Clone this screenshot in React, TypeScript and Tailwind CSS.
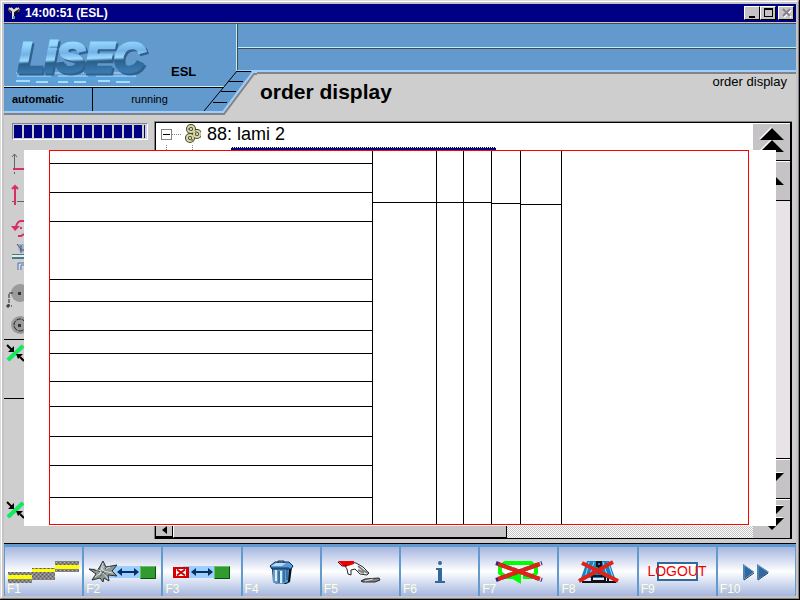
import React from "react";

const segments = Array.from({ length: 13 }, (_, i) => i);

function TitleBar() {
  const button =
    "flex h-[14px] w-4 items-center justify-center border border-t-white border-l-white border-r-black border-b-black bg-[#c6c3c6]";
  return (
    <header className="flex h-[18px] shrink-0 items-center bg-[#000084] pr-[2px] pl-[2px]">
      <svg width="16" height="16" viewBox="0 0 16 16" aria-hidden="true">
        <path d="M1 3l4-1 3 2 3-2 4 1-3 5-3 1v5H7V9L4 8z" fill="#111" />
        <path d="M3 3l4 3v8M13 3L8 6M5 3l3 3 3-3" stroke="#ddd" strokeWidth="2" fill="none" />
        <path d="M2 4l3 4M12 7l2-3" stroke="#a5559c" />
        <path d="M8 11v3" stroke="#4a9c9c" strokeWidth="2" />
      </svg>
      <h1 className="ml-[3px] flex-1 text-[12px] leading-4 font-bold text-white">14:00:51 (ESL)</h1>
      <button type="button" aria-label="Minimize" className={button}>
        <svg width="12" height="12" shapeRendering="crispEdges"><path d="M3 9h6v2H3z" /></svg>
      </button>
      <button type="button" aria-label="Maximize" className={button}>
        <svg width="12" height="12" shapeRendering="crispEdges">
          <path d="M2 1h9v9H2z M3 3v6h7V3z" fillRule="evenodd" />
        </svg>
      </button>
      <button type="button" aria-label="Close" className={`${button} ml-[2px]`}>
        <svg width="12" height="12" fill="none" strokeWidth="2">
          <path d="M4 3l7 7M11 3l-7 7" stroke="#fff" />
          <path d="M3 2l7 7M10 2l-7 7" stroke="#848284" />
        </svg>
      </button>
    </header>
  );
}

function Logo() {
  return (
    <svg width="144" height="60" viewBox="0 0 144 60" role="img" aria-label="LiSEC">
      <defs>
        <linearGradient id="chrome" x1="0" y1="0" x2="0.1" y2="1">
          <stop offset="0.25" stopColor="#94d7ff" />
          <stop offset="0.45" stopColor="#73b2e7" />
          <stop offset="0.58" stopColor="#9cdbff" />
          <stop offset="0.64" stopColor="#29618c" />
          <stop offset="0.85" stopColor="#3979b0" />
        </linearGradient>
      </defs>
      <path d="M4 49h35l3 3 4-3h30l4 3 4-3h42l-4 7H86l-6-2-5 3H45l-5-2-4 2H4z" fill="#5aa2de" />
      <path d="M4 47h118M5 50h34M46 50h30M84 50h40" stroke="#b5e3ff" />
      <path
        d="M4 55h14M24 56h12M46 56h10M62 56h12M86 55h12M104 56h14"
        stroke="#a5dbff"
        strokeWidth="2"
        fill="none"
      />
      <text
        x="6"
        y="46"
        className="drop-shadow-[2px_2px_0_#31618c]"
        fontFamily="Liberation Sans, Arial, sans-serif"
        fontWeight="bold"
        fontStyle="italic"
        fontSize="43"
        fill="url(#chrome)"
        stroke="url(#chrome)"
        strokeWidth="3"
      >
        LiSEC
      </text>
    </svg>
  );
}

function HeaderPanel() {
  return (
    <section className="relative mt-px flex h-[92px] shrink-0 border-t border-[#4a4a4a] bg-[#cecece]">
      <div className="flex w-[232px] shrink-0 flex-col">
        <div className="flex h-[62px] items-end bg-[#639ace] pl-[8px]">
          <Logo />
          <span className="ml-[15px] pb-[6px] text-[13px] leading-4 font-bold">ESL</span>
        </div>
        <div className="h-px bg-[#bdf3ff]" />
        <div className="h-px bg-black" />
        <div className="flex h-[23px] items-center bg-[#639ace] text-[11px]">
          <span className="flex h-full w-[89px] items-center border-r border-black pl-2 font-bold">automatic</span>
          <span className="w-[113px] text-center">running</span>
        </div>
        <div className="h-[2px] bg-[#9ccfff]" />
        <div className="h-[2px] bg-[#848284]" />
      </div>
      <div className="flex flex-1 flex-col">
        <div className="border-l border-[#bdf3ff]">
          <div className="border-l border-[#4a4a4a] bg-[#639ace]">
            <div className="h-[23px]" />
            <div className="h-px bg-[#bdf3ff]" />
            <div className="h-px bg-[#4a4a4a]" />
            <div className="h-[21px]" />
          </div>
        </div>
        <div className="h-[2px] bg-[#9ccfff]" />
        <div className="h-[2px] bg-[#848284]" />
        <div className="flex justify-between pr-[9px] pl-[24px]">
          <h2 className="pt-[6px] text-[21px] leading-6 font-bold">order display</h2>
          <span className="text-[13px] leading-4">order display</span>
        </div>
      </div>
      <svg className="absolute top-[47px] left-[199px]" width="54" height="44" viewBox="0 0 54 44" aria-hidden="true">
        <path d="M34 0H54V44H1V42L34 0Z" fill="#cecece" />
        <path d="M1 40L34 0H50L20 40Z" fill="#639ace" />
        <path d="M0 41H20L50 1H54" stroke="#9ccfff" strokeWidth="2" fill="none" />
        <path d="M0 43H21L51 3H54" stroke="#848284" strokeWidth="2" fill="none" />
        <path d="M1 40L34 0M33 .5H48M25 10.5H40M18 20.5H33M10 31.5H24" stroke="#000" fill="none" />
      </svg>
    </section>
  );
}

function SideTools() {
  return (
    <div className="w-[20px] shrink-0 overflow-hidden">
      <svg className="block" width="20" height="30" aria-hidden="true">
        <path d="M10.5 4v15M8 7l2.500-3L13 7M10.500 22v2" stroke="#636563" fill="none" />
        <path d="M9 19h11" stroke="#d63063" strokeWidth="2" />
      </svg>
      <svg className="block" width="20" height="33" aria-hidden="true">
        <path d="M8 21.500h3M13 21.500h7" stroke="#636563" />
        <path d="M11 25V7M8 9l3-3 3 3" stroke="#d63063" strokeWidth="2" fill="none" />
      </svg>
      <svg className="block" width="20" height="29" aria-hidden="true">
        <path d="M20 8h-3q-3 0-5 5M14 23h3l3-2" stroke="#d63063" strokeWidth="2" fill="none" />
        <path d="M7 13h9l-5 5zM16 14h2v2h-2z" fill="#d63063" />
      </svg>
      <svg className="block" width="20" height="38" aria-hidden="true">
        <path d="M13 2h7v9l-5-2z" fill="#a5b2c6" />
        <path d="M13 2l4 5v4M17 3v5h3" stroke="#42597b" fill="none" />
        <path d="M8 12h12v5H8z" fill="#4a7984" />
        <path d="M8 14h12" stroke="#dee" strokeWidth="2" />
        <path d="M14 28v-7h6M17 28v-5h3" stroke="#526da5" fill="#dde" />
      </svg>
      <svg className="block" width="20" height="32" aria-hidden="true">
        <circle cx="16" cy="13" r="9" fill="#9c9a9c" />
        <path d="M14 12h3v3h-3z" fill="#333" />
        <path d="M9 13H5v13M2 26h6M4 24v5" stroke="#222" strokeDasharray="4 1" fill="none" />
      </svg>
      <svg className="block" width="20" height="27" aria-hidden="true">
        <circle cx="16" cy="13" r="9" fill="#9c9a9c" />
        <circle cx="16" cy="13" r="6" stroke="#222" strokeDasharray="5 1" fill="none" />
        <path d="M14 12h3v3h-3z" fill="#333" />
      </svg>
      <div className="h-px bg-black" />
      <div className="h-[58px]"><CompressIcon /></div>
      <div className="h-px bg-black" />
      <div className="h-[98px]" />
      <CompressIcon />
    </div>
  );
}

function CompressIcon() {
  return (
    <svg className="block" width="20" height="26" aria-hidden="true">
      <path d="M4 20L19 6" stroke="#00df9c" strokeWidth="4" />
      <path d="M4 20L19 6" stroke="#18f329" strokeWidth="2" />
      <path d="M3 5l5 5M20 21l-4-4" stroke="#000" strokeWidth="2" />
      <path d="M10 6v6H4zM12 14h7l-5 5z" />
    </svg>
  );
}

function ScrollButton({ label, d, size }: { label: string; d: string; size: string }) {
  return (
    <button
      type="button"
      aria-label={label}
      className={`flex w-full shrink-0 items-start border-t border-t-white border-b-black bg-[#c6c3c6] ${size}`}
    >
      <svg width="37" height="36" viewBox="0 0 37 36">
        <path d={d} fill="#fff" transform="translate(-1 -1)" />
        <path d={d} />
      </svg>
    </button>
  );
}

function OrderTree() {
  return (
    <div className="mt-[6px] mr-[4px] mb-[4px] flex flex-1 border-t border-l border-[#848284]">
      <div className="flex flex-1 border border-r-2 border-black">
        <div className="flex min-w-0 flex-1 flex-col bg-white">
          <div className="flex-1">
            <div className="flex h-[22px] items-center pl-[5px]">
              <button type="button" aria-label="Collapse" className="flex size-[11px] items-center justify-center border border-[#848284]">
                <span className="h-px w-[7px] bg-black" />
              </button>
              <span className="w-[9px] border-t border-dotted border-[#848284]" />
              <svg className="ml-1" width="16" height="20" viewBox="0 0 16 20" fill="none" aria-hidden="true">
                <g stroke="#424129" strokeWidth="4">
                  <circle cx="6" cy="5" r="3" /><circle cx="12" cy="10" r="3" /><circle cx="5" cy="14" r="3" />
                </g>
                <g stroke="#d6d7a5" strokeWidth="2">
                  <circle cx="6" cy="5" r="3" /><circle cx="12" cy="10" r="3" /><circle cx="5" cy="14" r="3" />
                </g>
                <path d="M3 5h1M10 8h2M6 16h2" stroke="#949252" strokeWidth="2" />
              </svg>
              <span className="ml-[6px] text-[18px] leading-[22px]">88: lami 2</span>
            </div>
            <div className="ml-[10px] flex h-[5px] border-l border-dotted border-[#848284]">
              <div className="ml-[25px] w-px border-l border-dotted border-[#848284]" />
              <div className="mt-[2px] ml-[38px] w-[265px] border-t border-dotted border-[#ffff73] bg-[#000084]" />
            </div>
          </div>
          <div className="flex h-[14px] bg-[conic-gradient(#fff_25%,#c6c3c6_0_50%,#fff_0_75%,#c6c3c6_0)] bg-[length:2px_2px]">
            <button type="button" aria-label="Scroll left" className="flex w-[17px] items-center justify-center border-r border-b-2 border-black bg-[#c6c3c6]">
              <svg width="5" height="8"><path d="M5 0v8L0 4z" /></svg>
            </button>
            <div className="w-[334px] border-r border-b border-l border-r-black border-b-black border-l-white bg-[#c6c3c6]" />
          </div>
        </div>
        <div className="flex w-[37px] shrink-0 flex-col bg-[#e7e3e7]">
          <ScrollButton size="h-[38px] border-b" label="First" d="M19 4l12 12H7zM19 16l12 12H7z" />
          <ScrollButton size="h-[40px] border-b" label="Up" d="M19 11l12 12H7z" />
          <div className="flex-1 border-b border-black" />
          <ScrollButton size="h-[40px] border-b" label="Down" d="M7 13h24L19 25z" />
          <ScrollButton size="h-[39px]" label="Last" d="M7 6h24L19 18zM7 18h24L19 30z" />
        </div>
      </div>
    </div>
  );
}

const rows = [
  "h-[13px]", "h-[29px]", "h-[29px]", "h-[58px]", "h-[22px]", "h-[29px]",
  "h-[23px]", "h-[28px]", "h-[25px]", "h-[30px]", "h-[29px]", "h-[32px]",
];

const columns = [
  ["w-[64px]", "h-[52px]"],
  ["w-[27px]", "h-[52px]"],
  ["w-[28px]", "h-[52px]"],
  ["w-[29px]", "h-[53px]"],
  ["w-[41px]", "h-[54px]"],
];

function Sheet() {
  return (
    <div className="absolute top-[35px] right-[20px] bottom-[17px] left-[20px] flex bg-white pr-[27px] pb-px pl-[25px]">
      <div className="flex flex-1 border border-[#ff0000]">
        <div className="w-[323px] border-r border-black">
          {rows.map((h, i) => (
            <div key={i} className={`border-b border-black ${h}`} />
          ))}
        </div>
        {columns.map(([w, h], i) => (
          <div key={i} className={`border-r border-black ${w}`}>
            <div className={`border-b border-black ${h}`} />
          </div>
        ))}
      </div>
    </div>
  );
}

function Plates() {
  return (
    <svg width="72" height="24" viewBox="0 0 72 24" shapeRendering="crispEdges">
      <defs>
        <pattern id="grain" width="4" height="4" patternUnits="userSpaceOnUse">
          <path d="M0 0h4v4H0z" fill="#848284" />
          <path d="M0 0h1v1H0zM2 2h1v1H2z" fill="#5a595a" />
          <path d="M2 0h1v1H2zM0 2h1v1H0z" fill="#adaead" />
        </pattern>
      </defs>
      <path d="M0 12h24v11H0zM24 8h23v12H24zM47 1h24v11H47z" fill="url(#grain)" />
      <path d="M0 15h24v4H0zM24 9h23v3H24zM47 5h24v4H47z" fill="#ffff00" />
    </svg>
  );
}

function Transfer({ source }: { source: "star" | "cross" }) {
  const star = source === "star";
  return (
    <svg width={star ? 68 : 58} height="24" viewBox={star ? "0 0 68 24" : "10 0 58 24"}>
      <path d="M20 6h32v12H20z" fill="#9ccfff" />
      <path d="M29 12h20" stroke="#083063" strokeWidth="2" />
      <path d="M28 12l5-4v8zM50 12l-5-4v8z" fill="#083063" />
      <path d="M51 6h16v13H51z" fill="#319a31" />
      <path d="M51.500 18V6.500H66" stroke="#63c363" fill="none" />
      <path d="M52 18.500h14.500V7" stroke="#085108" fill="none" />
      {star ? (
        <g>
          <path d="M14 1l3 6 11-2-5 6 5 5-9-1 1 6-5-3-1 4-3-4-8 2 4-6-7-5 9 1z" fill="#8c9694" stroke="#293030" />
          <path d="M14 3l-2 7 7 9M3 8l9 3 9-4M6 17l8-6 10 2M10 15l5-9" stroke="#d6dede" fill="none" />
          <path d="M9 8l8 7M17 8l-6 9M5 10l12 3" stroke="#424949" strokeDasharray="2 2" />
        </g>
      ) : (
        <g>
          <path d="M10 7h16v11H10z" fill="#d60000" />
          <path d="M13 9h10v7H13z" fill="#fff" />
          <path d="M14 9.500l8 6M22 9.500l-8 6" stroke="#d60000" strokeWidth="2" />
        </g>
      )}
    </svg>
  );
}

function Bin() {
  return (
    <svg width="26" height="26" viewBox="0 0 26 26">
      <path d="M4 8h20l-2 15-4 2H9l-4-2z" fill="#001021" />
      <path d="M5 10h16l-1 13-5 2H9l-4-2z" fill="#639ac6" />
      <path d="M8 11v11M13 12v12" stroke="#d6efff" strokeWidth="2" />
      <path d="M11 12v12M16 11v12M19 10v11" stroke="#10498c" strokeWidth="1" />
      <path d="M2 7l5-4h14l4 4-2 3H4z" fill="#5a9ad6" stroke="#082b52" />
      <path d="M3 7h11l4-3H8z" fill="#b5dbf7" />
      <path d="M10 4V2h6v2M3 9h18" stroke="#10305a" fill="none" />
    </svg>
  );
}

function Hand() {
  return (
    <svg width="44" height="26" viewBox="0 0 44 26">
      <path d="M7 7l5-4 6 1 7 4 6 6-2 2-7-1-5-5-4 1v5l-3-1-1-5z" fill="#fff" stroke="#292829" />
      <path d="M0 2h16v3l-6 2H5z" fill="#ef0000" />
      <path d="M20 7l6 5 4 2M20 11l6 3" stroke="#848284" strokeWidth="2" fill="none" />
      <path d="M0 3l4 4h5" stroke="#5a0000" fill="none" />
      <path d="M23 22l4-2 14-1 1 2-5 2H25z" fill="#848284" stroke="#292829" />
      <path d="M27 22l8-2" stroke="#dedbde" />
    </svg>
  );
}

function Info() {
  return (
    <svg width="12" height="24" viewBox="0 0 12 24" fill="#31699c">
      <circle cx="6" cy="3" r="2" />
      <path d="M2 8h6v13h3v2H1v-2h3V10H2z" />
    </svg>
  );
}

function Loop() {
  return (
    <svg width="52" height="26" viewBox="0 0 52 26">
      <path d="M20 18h-7l-6-4V8l5-4h26l5 4v6l-5 4h-8" stroke="#00ff00" strokeWidth="4" fill="none" />
      <path d="M16 18l12-5v12z" fill="#00ff00" />
      <path d="M3 4l46 17M3 21L49 4" stroke="#312484" strokeWidth="4" strokeDasharray="4 2" />
      <path d="M5 5l42 15M5 20L47 5" stroke="#de2418" strokeWidth="4" />
    </svg>
  );
}

function Road() {
  return (
    <svg width="42" height="26" viewBox="5 0 42 26">
      <path d="M15 2h22l6 17H9z" fill="#1882c6" />
      <path d="M17 3l-4 16M22 3l-5 16M31 3l5 16M36 3l5 16" stroke="#9cdfff" />
      <path d="M25 3h4v4h-4zM27 7v8M20 17h13v5H20zM10 23h34M36 19v4h5" stroke="#101018" strokeWidth="2" fill="none" />
      <path d="M10 4l36 18M7 22L41 3" stroke="#de2418" strokeWidth="4" />
    </svg>
  );
}

function Logout() {
  return (
    <svg width="62" height="22" viewBox="0 0 62 22">
      <path d="M12 2h39v17H12z" fill="#fff" stroke="#31699c" strokeWidth="2" />
      <text x="31" y="15" textAnchor="middle" fontFamily="Liberation Sans, Arial, sans-serif" fontSize="14" fill="#ef0000">LOGOUT</text>
    </svg>
  );
}

function Next() {
  return (
    <svg width="26" height="18" viewBox="0 0 26 18">
      <path d="M0 1l11 8L0 17zM14 1l12 8-12 8z" fill="#31699c" />
      <path d="M1 17V2l10 7M15 17V2l10 7" stroke="#6ba2d6" fill="none" />
      <path d="M1 17l10-7M15 17l10-7" stroke="#103c63" />
    </svg>
  );
}

const keys = [
  { name: "F1", label: "Plates", icon: <Plates /> },
  { name: "F2", label: "Start transfer", icon: <Transfer source="star" /> },
  { name: "F3", label: "Cancel transfer", icon: <Transfer source="cross" /> },
  { name: "F4", label: "Delete", icon: <Bin /> },
  { name: "F5", label: "Remove", icon: <Hand /> },
  { name: "F6", label: "Info", icon: <Info /> },
  { name: "F7", label: "Loop off", icon: <Loop /> },
  { name: "F8", label: "Line off", icon: <Road /> },
  { name: "F9", label: "Logout", icon: <Logout /> },
  { name: "F10", label: "Next", icon: <Next /> },
];

function FunctionKeys() {
  return (
    <footer className="flex h-[53px] shrink-0 gap-[2px] border-t border-black bg-[#639ace] px-px pt-[3px]">
      {keys.map((key) => (
        <button
          key={key.name}
          type="button"
          aria-label={`${key.name} ${key.label}`}
          className="relative flex min-w-0 flex-1 items-center justify-center bg-linear-to-b from-[#a5b6de] via-white to-[#a5b6de]"
        >
          {key.icon}
          <span className="absolute bottom-0 left-[2px] text-[12px] leading-[13px] text-[#ffffde]">{key.name}</span>
        </button>
      ))}
    </footer>
  );
}

export default function App() {
  return (
    <div className="flex min-h-screen flex-col border-r border-b border-black bg-[#c6c3c6] font-['Liberation_Sans',Arial,sans-serif] text-black">
      <div className="flex flex-1 flex-col border border-[#dedbde] border-r-[#848284] border-b-[#848284]">
        <div className="flex flex-1 flex-col border border-t-white border-r-[#c6c3c6] border-b-[#c6c3c6] border-l-white pt-[2px] pr-px pb-px pl-[2px]">
          <TitleBar />
          <HeaderPanel />
          <main className="relative flex flex-1 bg-[#cecece]">
            <div className="flex w-[150px] shrink-0 flex-col">
              <div
                role="progressbar"
                aria-label="Progress"
                className="mt-[8px] ml-[8px] flex h-[17px] w-[136px] gap-[2px] border border-t-[#848284] border-r-white border-b-white border-l-[#848284] p-px"
              >
                {segments.map((s) => (
                  <span key={s} className="w-2 bg-[#000084]" />
                ))}
                <span className="w-px bg-[#000084]" />
              </div>
              <div className="mt-[10px] flex flex-1">
                <SideTools />
              </div>
            </div>
            <OrderTree />
            <Sheet />
          </main>
          <FunctionKeys />
        </div>
      </div>
    </div>
  );
}
